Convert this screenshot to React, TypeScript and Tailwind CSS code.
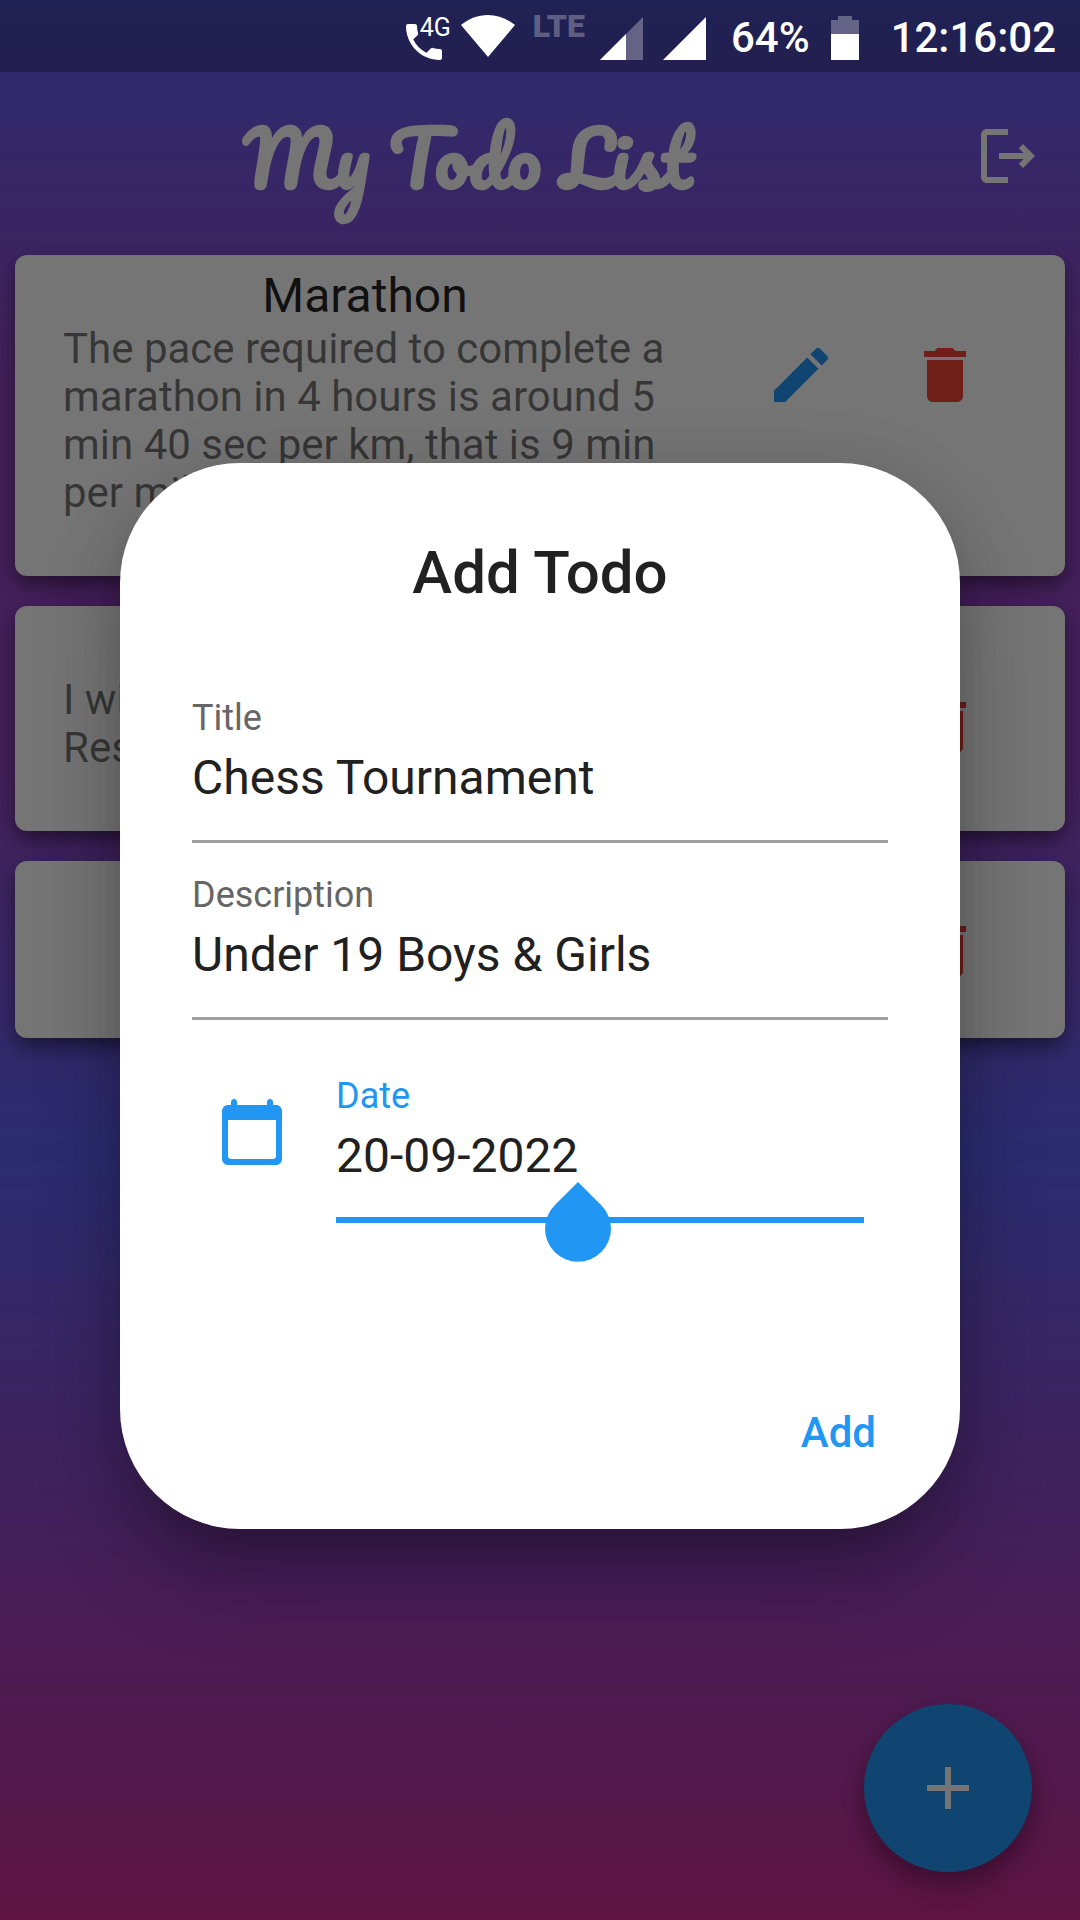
import { useState } from "react";
import type { ReactNode } from "react";

function StatusBar() {
  return (
    <header className="relative z-30 flex h-[72px] items-center justify-end bg-black/25 pt-1 pr-6 font-medium text-white">
      <div className="relative mr-[10px] h-[44px] w-[45px]">
        <svg viewBox="0 0 36 36" className="absolute bottom-0 left-0 size-9 fill-white" aria-hidden="true">
          <path d="M7.2 15.6c2.9 5.7 7.5 10.3 13.2 13.2l4.4-4.4c.6-.6 1.3-.7 2-.5 2.2.7 4.6 1.1 7.2 1.1 1.1 0 2 .9 2 2v7c0 1.1-.9 2-2 2C15.200 36 0 20.800 0 2 0 .9.9 0 2 0h7c1.100 0 2 .9 2 2 0 2.500.4 4.900 1.100 7.200.2.7.1 1.500-.5 2z" />
        </svg>
        <span className="absolute right-0 top-0.5 text-[25px] leading-5 font-normal">4G</span>
      </div>
      <svg viewBox="0 0 54 42" className="mr-[18px] mb-1 h-[42px] w-[54px] fill-white" aria-label="Wi-Fi">
        <path d="M0 10C8 3.500 17 0 27 0s19 3.500 27 10L27 42z" />
      </svg>
      <span className="mr-[15px] mb-6 text-[32px] leading-8 font-black text-white/30">LTE</span>
      <svg viewBox="0 0 43 43" className="mr-5 size-[43px]" aria-label="Signal, first card">
        <path d="M43 0v43H0z" className="fill-white/30" />
        <path d="M26 17v26H0z" className="fill-white" />
      </svg>
      <svg viewBox="0 0 43 43" className="mr-[25px] size-[43px] fill-white" aria-label="Signal, second card">
        <path d="M43 0v43H0z" />
      </svg>
      <span className="mr-[21px] text-[42px] leading-[48px]">64%</span>
      <svg viewBox="0 0 28 44" className="mr-8 h-11 w-7" aria-label="Battery">
        <path d="M7 0h14v4h7v14H0V4h7z" className="fill-white/30" />
        <path d="M0 18h28v26H0z" className="fill-white" />
      </svg>
      <span className="text-[42px] leading-[48px]">12:16:02</span>
    </header>
  );
}

function IconButton({ label, className, children }: { label: string; className: string; children: ReactNode }) {
  return (
    <button type="button" aria-label={label} className={className}>
      <svg viewBox="0 0 24 24" className="size-[72px] fill-current" aria-hidden="true">
        {children}
      </svg>
    </button>
  );
}

type Todo = { title?: string; description?: string };

const todos: Todo[] = [
  {
    title: "Marathon",
    description:
      "The pace required to complete a marathon in 4 hours is around 5 min 40 sec per km, that is 9 min per mile",
  },
  { title: "\u00a0", description: "I will\nRes" },
  {},
];

function TodoCard({ title, description }: Todo) {
  return (
    <li className="flex min-h-[177px] items-center rounded-xl bg-white px-12 shadow-[0_12px_21px_-3px_rgba(0,0,0,0.3),0_6px_18px_rgba(0,0,0,0.25)]">
      <div className={title ? "flex-1 self-start pt-[13px] pb-[59px]" : "flex-1"}>
        {title && <h2 className="text-center text-[48px] leading-[56px] text-black/87">{title}</h2>}
        {description && (
          <p className="mt-px text-[42px] leading-[48px] whitespace-pre-line text-black/54">{description}</p>
        )}
      </div>
      <div className={title ? "ml-[62px] flex self-start pt-12" : "ml-[62px] flex"}>
        <IconButton label="Edit" className="flex size-36 items-center justify-center text-[#2196f3]">
          <path d="M3 17.250V21h3.750L17.810 9.940l-3.750-3.750L3 17.250zM20.710 7.040a1 1 0 0 0 0-1.410l-2.340-2.340a1 1 0 0 0-1.410 0l-1.830 1.830 3.750 3.750 1.830-1.830z" />
        </IconButton>
        <IconButton label="Delete" className="flex size-36 items-center justify-center text-[#f44336]">
          <path d="M6 19c0 1.100.9 2 2 2h8c1.100 0 2-.9 2-2V7H6v12zM19 4h-3.500l-1-1h-5l-1 1H5v2h14V4z" />
        </IconButton>
      </div>
    </li>
  );
}

function Field({ id, label, initial }: { id: string; label: string; initial: string }) {
  const [value, setValue] = useState(initial);
  return (
    <div className="flex flex-col border-b-[3px] border-[#9e9e9e] pb-[34px]">
      <label htmlFor={id} className="text-[36px] leading-[42px] text-[#666666]">
        {label}
      </label>
      <input
        id={id}
        value={value}
        onChange={(e) => setValue(e.target.value)}
        className="mt-[11px] h-14 w-full bg-transparent text-[48px] leading-[56px] text-[#212121] outline-none"
      />
    </div>
  );
}

function DateField() {
  const [value, setValue] = useState("20-09-2022");
  return (
    <div className="mt-[55px] mr-6 flex items-start">
      <svg viewBox="0 0 24 24" className="mx-6 mt-[21px] size-[72px] fill-[#2196f3]" aria-hidden="true">
        <path d="M20 3h-1V2c0-.55-.45-1-1-1s-1 .45-1 1v1H7V2c0-.55-.45-1-1-1s-1 .45-1 1v1H4c-1.100 0-2 .9-2 2v16c0 1.100.9 2 2 2h16c1.100 0 2-.9 2-2V5c0-1.100-.9-2-2-2zm-1 18H5c-.55 0-1-.45-1-1V8h16v12c0 .55-.45 1-1 1z" />
      </svg>
      <div className="relative ml-6 flex flex-1 flex-col border-b-[6px] border-[#2196f3] pb-[33px]">
        <label htmlFor="date" className="text-[36px] leading-[42px] text-[#2196f3]">
          Date
        </label>
        <input
          id="date"
          value={value}
          onChange={(e) => setValue(e.target.value)}
          className="mt-[11px] h-14 w-full bg-transparent text-[48px] leading-[56px] text-[#212121] outline-none"
        />
        <svg viewBox="0 0 66 80" className="absolute top-[107px] left-[209px] h-20 w-[66px] fill-[#2196f3]" aria-hidden="true">
          <path d="M33 0L56.300 23.300A33 33 0 1 1 9.700 23.300z" />
        </svg>
      </div>
    </div>
  );
}

export default function App() {
  return (
    <div className="relative flex min-h-screen flex-col bg-[linear-gradient(to_bottom,#5e61f4_0%,#9546c4_20%,#9546c4_40%,#5e61f4_60%,#9546c4_80%,#cb2b93_100%)] font-[Roboto,sans-serif]">
      <StatusBar />
      <div className="flex h-[168px] items-center px-9">
        <h1 className="flex-1 pt-0.5 text-center font-[Pacifico,cursive] text-[75px] leading-[90px] font-bold text-white">
          My Todo List
        </h1>
        <IconButton label="Log out" className="ml-[72px] text-white">
          <path d="M17 8l-1.410 1.410L17.170 11H9v2h8.170l-1.580 1.580L17 16l4-4-4-4zM5 5h7V3H5c-1.100 0-2 .9-2 2v14c0 1.100.9 2 2 2h7v-2H5V5z" />
        </IconButton>
      </div>
      <ul className="flex flex-1 flex-col gap-[30px] p-[15px]">
        {todos.map((todo, i) => (
          <TodoCard key={i} {...todo} />
        ))}
      </ul>
      <button
        type="button"
        aria-label="Add todo"
        className="absolute right-12 bottom-12 flex size-[168px] items-center justify-center rounded-full bg-[#2196f3] text-white shadow-[0_15px_24px_rgba(0,0,0,0.2),0_6px_24px_rgba(0,0,0,0.2)]"
      >
        <svg viewBox="0 0 24 24" className="size-[72px] fill-current" aria-hidden="true">
          <path d="M19 13h-6v6h-2v-6H5v-2h6V5h2v6h6v2z" />
        </svg>
      </button>

      <div className="absolute inset-0 z-20 flex items-center justify-center bg-black/54 px-[120px] pt-[72px]">
        <form
          role="dialog"
          aria-labelledby="dialog-title"
          onSubmit={(e) => e.preventDefault()}
          className="flex w-full flex-col rounded-[120px] bg-white px-[72px] pt-[74px] pb-6 shadow-[0_33px_45px_-21px_rgba(0,0,0,0.2),0_54px_90px_rgba(0,0,0,0.18),0_12px_75px_rgba(0,0,0,0.12)]"
        >
          <h2 id="dialog-title" className="mb-[88px] text-center text-[60px] leading-[72px] font-medium text-[#212121]">
            Add Todo
          </h2>
          <div className="flex flex-col gap-[31px]">
            <Field id="title" label="Title" initial="Chess Tournament" />
            <Field id="description" label="Description" initial="Under 19 Boys & Girls" />
          </div>
          <DateField />
          <button
            type="submit"
            className="mt-[138px] -mr-3 h-36 self-end px-6 text-[42px] leading-[48px] font-medium text-[#2196f3]"
          >
            Add
          </button>
        </form>
      </div>
    </div>
  );
}
